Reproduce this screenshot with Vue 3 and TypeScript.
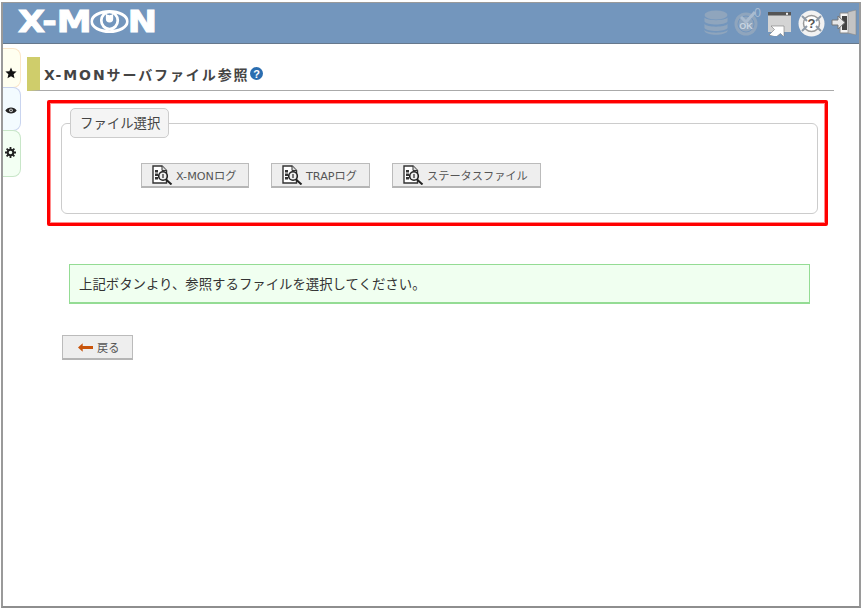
<script setup lang="ts">
const fileButtons = [
  { label: 'X-MONログ', cls: 'btn-xmon' },
  { label: 'TRAPログ', cls: 'btn-trap' },
  { label: 'ステータスファイル', cls: 'btn-status' }
];
</script>

<template>
  <div class="frame">
    <header class="topbar">
      <div class="logo">
        <span>X-M</span>
        <svg class="logo-eye" width="34" height="23" viewBox="0 0 42 24" preserveAspectRatio="none">
          <ellipse cx="21" cy="12" rx="19.500" ry="10.500" fill="none" stroke="#fff" stroke-width="3" />
          <circle cx="21" cy="11" r="9" fill="none" stroke="#fff" stroke-width="3" />
          <path d="M17 4a6 6 0 0 0 8 0v5a4 4 0 0 1-8 0z" fill="#fff" />
        </svg>
        <span>N</span>
      </div>
      <div class="tools">
        <svg width="24" height="26" viewBox="0 0 24 26">
          <g fill="#8fa5bd">
            <ellipse cx="12" cy="5" rx="11.500" ry="4.500" />
            <path d="M.5 7.500c2 3.500 21 3.500 23 0v4c-2 4-21 4-23 0zM.5 14c2 3.500 21 3.500 23 0v4c-2 4-21 4-23 0zM.5 20c2 3.500 21 3.500 23 0v1c-2 5-21 5-23 0z" />
          </g>
        </svg>
        <div class="ok-wrap">
          <svg width="28" height="26" viewBox="0 0 28 26">
            <circle cx="13" cy="14" r="11.500" fill="#8fa5bd" />
            <circle cx="13" cy="14" r="8" fill="none" stroke="#7396bd" stroke-width="1" />
            <path d="M8 7l5 5 9-10" fill="none" stroke="#a9bbcf" stroke-width="3" />
            <text x="13" y="19" font-size="9" font-weight="700" text-anchor="middle" fill="#c9d5e2" font-family="Liberation Sans, sans-serif">OK</text>
          </svg>
          <span class="ok-count">0</span>
        </div>
        <svg width="25" height="26" viewBox="0 0 25 26">
          <rect x="1" y="2" width="23" height="20" fill="#d4d4d4" />
          <rect x="1" y="2" width="23" height="3.500" fill="#555" />
          <rect x="19" y="2.800" width="2" height="2" fill="#eee" />
          <path d="M2 25l5.500-5.500L4 16h13v11l-3.500-3.500L9 27z" fill="#fff" stroke="#777" stroke-width=".6" />
        </svg>
        <svg width="27" height="27" viewBox="0 0 27 27">
          <circle cx="13.500" cy="13.500" r="13" fill="#f2f2f2" />
          <circle cx="13.500" cy="13.500" r="8" fill="#fff" stroke="#999" stroke-width="1.500" />
          <path d="M4 6l5 5M23 6l-5 5M4 21l5-5M23 21l-5-5" stroke="#8d9aa8" stroke-width="2" />
          <text x="13.500" y="18" font-size="13" font-weight="700" text-anchor="middle" fill="#555" font-family="Liberation Sans, sans-serif">?</text>
        </svg>
        <svg width="27" height="28" viewBox="0 0 27 28">
          <path d="M9 4h14v20H9z" fill="#f4f4f4" stroke="#888" />
          <path d="M17 3l8-2v25l-8-2z" fill="#c4c4c4" stroke="#888" stroke-width=".6" />
          <path d="M11 7h5v14h-5z" fill="#444" />
          <path d="M1 11h6V7l7 6.500-7 6.500v-4H1z" fill="#e8e8e8" stroke="#777" />
        </svg>
      </div>
    </header>

    <div class="body">
      <aside class="side">
        <div class="tab tab-fav">
          <svg width="12" height="12" viewBox="0 0 12 12"><path d="M6 .5l1.600 3.700 4 .4-3 2.700.9 4L6 9.200l-3.500 2.100.9-4-3-2.700 4-.4z" fill="#111" /></svg>
        </div>
        <div class="tab tab-eye">
          <svg width="12" height="9" viewBox="0 0 11 8"><path d="M.3 4C2.500.4 8.500.4 10.700 4 8.500 7.600 2.500 7.600.3 4z" fill="#222" /><circle cx="5.500" cy="3.800" r="1.700" fill="#ccc" /><circle cx="5.500" cy="3.800" r=".8" fill="#222" /></svg>
        </div>
        <div class="tab tab-gear">
          <svg width="11" height="11" viewBox="0 0 11 11">
            <circle cx="5.500" cy="5.500" r="2.800" fill="none" stroke="#222" stroke-width="2" />
            <path d="M5.500 0v2.500M5.500 8.500V11M0 5.500h2.500M8.500 5.500H11M1.600 1.600l1.800 1.800M7.600 7.600l1.800 1.800M9.400 1.600L7.600 3.400M3.400 7.600L1.600 9.400" stroke="#222" stroke-width="1.800" />
          </svg>
        </div>
      </aside>

      <main class="content">
        <div class="title-row">
          <h1 class="title">X-MONサーバファイル参照</h1>
          <svg class="help" width="13" height="13" viewBox="0 0 13 13">
            <circle cx="6.500" cy="6.500" r="6.500" fill="#2a6db0" />
            <text x="6.500" y="10.500" font-size="11" font-weight="700" text-anchor="middle" fill="#fff" font-family="Liberation Sans, sans-serif">?</text>
          </svg>
        </div>

        <section class="highlight">
          <fieldset class="file-set">
            <legend class="file-legend">ファイル選択</legend>
            <div class="file-buttons">
              <button v-for="b in fileButtons" :key="b.label" type="button" class="btn" :class="b.cls">
                <svg width="21" height="20" viewBox="0 0 21 20">
                  <path d="M1 1h9l4.500 4.500V18H1z" fill="#fff" stroke="#333" stroke-width="1.400" />
                  <path d="M10 1v4.500h4.500" fill="#ddd" stroke="#333" />
                  <path d="M3 5h3v2.500H3zM3 8.500h3V11H3zM3 12h3v2.500H3z" fill="#333" />
                  <circle cx="11" cy="11" r="4.300" fill="#eee" stroke="#222" stroke-width="1.600" />
                  <path d="M14 14.500l5.500 5" stroke="#222" stroke-width="2" />
                  <path d="M11 9v4" stroke="#333" stroke-width="1.300" />
                </svg>
                <span>{{ b.label }}</span>
              </button>
            </div>
          </fieldset>
        </section>

        <p class="notice">上記ボタンより、参照するファイルを選択してください。</p>

        <button type="button" class="btn btn-back">
          <svg width="15" height="9" viewBox="0 0 16 9"><path d="M0 4.500L5 0v3h11v3H5v3z" fill="#c9540b" /></svg>
          <span>戻る</span>
        </button>
      </main>
    </div>
  </div>
</template>

<style>
html, body {
  background: #fff;
  overflow: hidden;
}
</style>

<style scoped>
.frame {
  box-sizing: border-box;
  width: 860px;
  height: 606px;
  margin: 2px 0 0 1px;
  border: 2px solid #9a9a9a;
  border-top-width: 1px;
  border-bottom-color: #8e8e8e;
  display: flex;
  flex-direction: column;
  font-family: "DejaVu Sans", "Noto Sans CJK JP", sans-serif;
  color: #444;
}

.topbar {
  box-sizing: border-box;
  height: 41px;
  background: #7396bd;
  border-bottom: 1px solid #66788c;
  display: flex;
  align-items: center;
  justify-content: space-between;
  padding: 0 1px 0 15px;
}

.logo {
  display: flex;
  align-items: center;
  font-family: "DejaVu Sans", sans-serif;
  font-weight: 700;
  font-size: 31px;
  line-height: 1;
  color: #fff;
  -webkit-text-stroke: 1px #fff;
  margin-top: -3px;
  transform: scaleX(1.13);
  transform-origin: left center;
}

.logo-eye {
  margin: 0 -1px;
}

.tools {
  display: flex;
  align-items: center;
  gap: 6px;
}

.ok-wrap {
  position: relative;
  height: 26px;
  margin-left: -1px;
}

.ok-count {
  position: absolute;
  top: -4px;
  right: 0;
  font-size: 12px;
  color: #a9bdd3;
  font-family: "Liberation Sans", sans-serif;
}

.body {
  flex: 1;
  display: flex;
  min-height: 0;
}

.side {
  width: 18px;
  flex: none;
  padding-top: 4px;
  display: flex;
  flex-direction: column;
}

.tab {
  box-sizing: border-box;
  border: 1px solid;
  border-left: none;
  border-radius: 0 8px 8px 0;
  padding-right: 2px;
  display: flex;
  align-items: center;
  justify-content: center;
}

.tab-fav {
  height: 40px;
  background: #fffff0;
  border-color: #fbe6c8;
  padding-top: 9px;
}

.tab-eye {
  height: 44px;
  background: #f3fbff;
  border-color: #c9d4ef;
  margin-top: -1px;
  padding-top: 3px;
}

.tab-gear {
  height: 47px;
  background: #f3fff3;
  border-color: #c8e6c8;
  margin-top: -1px;
  padding-bottom: 3px;
}

.content {
  flex: 1;
  min-width: 0;
  padding: 13px 25px 0 6px;
}

.title-row {
  box-sizing: border-box;
  height: 34px;
  display: flex;
  align-items: center;
  border-left: 13px solid #cfcd6b;
  border-bottom: 1px solid #aaa;
  padding-left: 4px;
  gap: 1px;
}

.title {
  margin: 0;
  font-size: 14px;
  font-weight: 700;
  letter-spacing: 1.900px;
  color: #444;
}

.highlight {
  box-sizing: border-box;
  width: 781px;
  height: 126px;
  margin: 9px 0 0 20px;
  border: 3px solid #f00;
  box-shadow: inset 0 0 0 1px #ff8c8c;
  border-radius: 2px;
  padding: 5px 6px 0 11px;
}

.file-set {
  box-sizing: border-box;
  width: 757px;
  height: 106px;
  margin: 0;
  padding: 0;
  border: 1px solid #ccc;
  border-radius: 6px;
  min-width: 0;
}

.file-legend {
  box-sizing: border-box;
  height: 30px;
  width: 99px;
  margin-left: 8px;
  padding: 0 0 0 9px;
  text-align: left;
  line-height: 27px;
  font-size: 13.400px;
  font-family: "Noto Sans CJK JP", sans-serif;
  background: #f4f4f4;
  border: 1px solid #ccc;
  border-radius: 5px;
  color: #444;
}

.file-buttons {
  display: flex;
  padding: 25px 0 0 79px;
  gap: 22px;
}

.btn {
  box-sizing: border-box;
  height: 25px;
  display: flex;
  align-items: center;
  padding: 0 0 0 10px;
  gap: 3px;
  background: #eee;
  border: 1px solid #bbb;
  border-bottom: 2px solid #b5b5b5;
  border-radius: 0;
  font-family: "DejaVu Sans", "Noto Sans CJK JP", sans-serif;
  font-size: 11.200px;
  color: #555;
}

.btn-xmon {
  width: 108px;
}

.btn-trap {
  width: 99px;
}

.btn-status {
  width: 149px;
}

.notice {
  box-sizing: border-box;
  width: 741px;
  height: 40px;
  margin: 38px 0 0 42px;
  padding: 0 0 2px 9px;
  display: flex;
  align-items: center;
  background: #f0fff0;
  border: 1px solid #94dc94;
  border-bottom-width: 2px;
  font-size: 13.400px;
  font-family: "Noto Sans CJK JP", sans-serif;
  color: #333;
}

.btn-back {
  width: 71px;
  margin: 31px 0 0 35px;
  padding-left: 15px;
  gap: 4px;
}
</style>
